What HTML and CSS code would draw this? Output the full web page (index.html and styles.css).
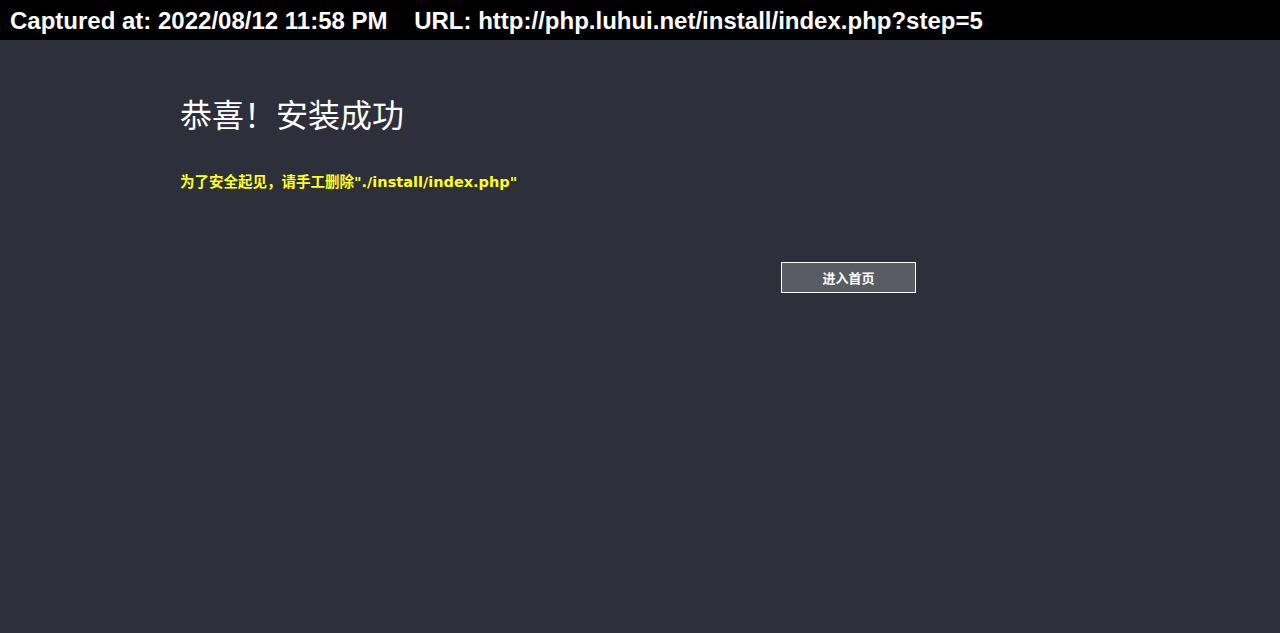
FILE: index.html
```html
<!DOCTYPE html>
<html lang="zh">
<head>
<meta charset="utf-8">
<link rel="stylesheet" href="styles.css">
</head>
<body>
<div class="capbar">Captured at: 2022/08/12 11:58 PM&nbsp;&nbsp;&nbsp;&nbsp;URL: http://php.luhui.net/install/index.php?step=5</div>
<main class="main">
  <h1 class="title">恭喜！安装成功</h1>
  <p class="warn">为了安全起见，请手工删除"./install/index.php"</p>
  <div class="actions"><a class="btn">进入首页</a></div>
</main>
</body>
</html>
```
FILE: styles.css
```css
html, body { margin: 0; padding: 0; }
body {
  background: #2d303b;
  font-family: "Liberation Sans", "Noto Sans CJK SC", sans-serif;
  height: 633px;
  overflow: hidden;
}
.capbar {
  height: 40px;
  background: #000;
  color: #fff;
  font-weight: bold;
  font-size: 24px;
  line-height: 42px;
  padding-left: 10px;
  white-space: nowrap;
}
.main {
  padding: 56px 0 0 180px;
}
.title {
  margin: 0;
  font-weight: normal;
  font-size: 32px;
  line-height: 40px;
  color: #fff;
}
.warn {
  margin: 36px 0 0;
  font-family: "DejaVu Sans", "Noto Sans CJK SC", sans-serif;
  font-size: 14.5px;
  font-weight: bold;
  color: #ffff1a;
  line-height: 20px;
}
.actions {
  margin-top: 70px;
  padding-left: 601px;
}
.btn {
  display: flex;
  align-items: center;
  justify-content: center;
  width: 133px;
  height: 29px;
  background: #5a5c63;
  border: 1px solid #fff;
  color: #fff;
  font-size: 13px;
  font-weight: bold;
}
```
